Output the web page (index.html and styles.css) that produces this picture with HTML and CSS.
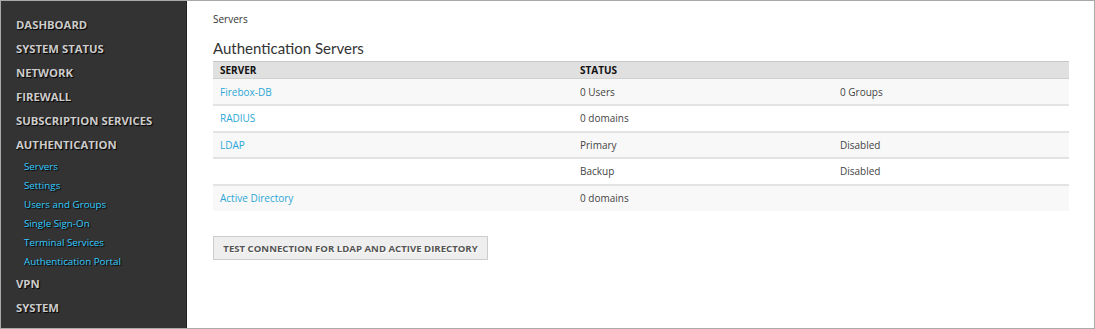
FILE: index.html
```html
<html>
	<head>
	<meta name="viewport" content="width=device-width, initial-scale=1">
	<title>Authentication Servers</title>
	<link rel="stylesheet" href="styles.css">
	</head>
	<body>
	<div class="frame">
		<div class="sidebar">
			<div class="nav">DASHBOARD</div>
			<div class="nav">SYSTEM STATUS</div>
			<div class="nav">NETWORK</div>
			<div class="nav">FIREWALL</div>
			<div class="nav">SUBSCRIPTION SERVICES</div>
			<div class="nav">AUTHENTICATION</div>
			<div class="subnav">
				<a class="sub">Servers</a>
				<a class="sub">Settings</a>
				<a class="sub">Users and Groups</a>
				<a class="sub">Single Sign-On</a>
				<a class="sub">Terminal Services</a>
				<a class="sub">Authentication Portal</a>
			</div>
			<div class="nav">VPN</div>
			<div class="nav">SYSTEM</div>
		</div>
		<div class="main">
			<div class="crumb">Servers</div>
			<h2 class="title">Authentication Servers</h2>
			<table class="servers">
				<tr><th class="c1">SERVER</th><th class="c2">STATUS</th><th></th></tr>
				<tr class="odd"><td><a class="link">Firebox-DB</a></td><td>0 Users</td><td>0 Groups</td></tr>
				<tr><td><a class="link">RADIUS</a></td><td>0 domains</td><td></td></tr>
				<tr class="odd"><td><a class="link">LDAP</a></td><td>Primary</td><td>Disabled</td></tr>
				<tr><td></td><td>Backup</td><td>Disabled</td></tr>
				<tr class="odd"><td><a class="link">Active Directory</a></td><td>0 domains</td><td></td></tr>
			</table>
			<button class="button">TEST CONNECTION FOR LDAP AND ACTIVE DIRECTORY</button>
		</div>
	</div>
	</body>
</html>
```

FILE: styles.css
```css
body{margin: 0;font-family: "Open Sans", sans-serif;}
.frame{
	width: 1095px;height: 329px;
	box-sizing: border-box;
	border: 1px solid #a9a9a9;
	display: flex;
	background-color: #fff;
}
.sidebar{
	width: 186px;
	background-color: #333;
	border-right: 1px solid #222;
	padding-top: 15px;
	box-sizing: border-box;
	flex: none;
}
.nav{
	font-size: 11.3px;
	font-weight: bold;
	color: #ccc;
	text-shadow: 1px 1px 1px #000;
	height: 24px;
	line-height: 18px;
	padding-left: 15px;
}
.subnav{display: flex;flex-direction: column;margin-top: -3px;margin-bottom: 4px;}
.sub{
	font-size: 9.8px;
	color: #3cf;
	text-shadow: 1px 1px 1px #000;
	height: 19px;
	line-height: 19px;
	padding-left: 23px;
}
.main{flex: 1;padding: 10px 25px 0 26px;}
.crumb{font-size: 10px;color: #333;line-height: 16px;}
.title{
	font-family: Lato, sans-serif;
	font-weight: normal;
	font-size: 15px;
	color: #333;
	margin: 11px 0 3px 0;
	line-height: 20px;
}
.servers{width: 856px;border-collapse: collapse;font-size: 10px;color: #444;}
.servers th{
	background-color: #e0e0e0;
	border-top: 1px solid #c8c8c8;
	border-bottom: 1px solid #d0d0d0;
	text-align: left;
	font-size: 10px;
	color: #111;
	height: 17px;
	padding: 0 7px;
}
.servers td{height: 26.5px;padding: 0 7px;border-bottom: 2px solid #e3e3e3;}
.servers tr:last-child td{border-bottom: none;}
.servers .c1{width: 346px;}
.servers .c2{width: 246px;}
.odd{background-color: #f8f8f8;}
.link{color: #2ba6d6;}
.button{
	margin-top: 25px;
	background-color: #eee;
	border: 1px solid #ccc;
	font-family: "Open Sans", sans-serif;
	font-size: 9.6px;
	font-weight: bold;
	color: #555;
	text-shadow: 1px 1px 0 #fff;
	height: 24px;
	width: 275px;
	padding: 0;
}
```
